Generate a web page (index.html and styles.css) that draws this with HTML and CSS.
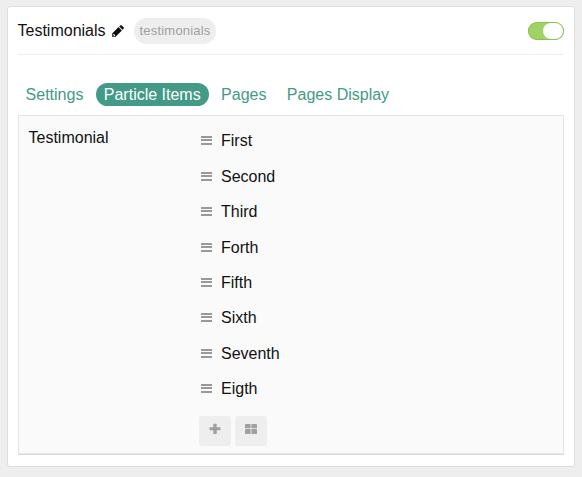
FILE: index.html
```html
<!DOCTYPE html>
<html lang="en">
<head>
<meta charset="utf-8">
<title>Testimonials</title>
<link rel="stylesheet" href="styles.css">
</head>
<body>
<section class="card">
  <header class="card-header">
    <h4 class="title">Testimonials</h4>
    <svg class="pencil" viewBox="0 0 12 12"><path fill="#111" fill-rule="evenodd" d="M.2 11.8V8.4L6.5 2.1l3.4 3.4-6.3 6.3zM7.2 1.4 8.3.4q.7-.6 1.4 0l1.9 1.9q.6.7 0 1.4l-1 1.1zM1.2 9.3v.9h.7v.8h.9l.5-.6-1.6-1.6z"/></svg>
    <span class="tag">testimonials</span>
    <span class="toggle"><span class="knob"></span></span>
  </header>
  <nav class="tabs">
    <a class="tab">Settings</a>
    <a class="tab active">Particle Items</a>
    <a class="tab">Pages</a>
    <a class="tab">Pages Display</a>
  </nav>
  <div class="panel">
    <div class="label">Testimonial</div>
    <div class="field">
      <ul class="items">
        <li><i class="bars"></i>First</li>
        <li><i class="bars"></i>Second</li>
        <li><i class="bars"></i>Third</li>
        <li><i class="bars"></i>Forth</li>
        <li><i class="bars"></i>Fifth</li>
        <li><i class="bars"></i>Sixth</li>
        <li><i class="bars"></i>Seventh</li>
        <li><i class="bars"></i>Eigth</li>
      </ul>
      <div class="actions">
        <span class="button"><svg width="12" height="12" viewBox="0 0 12 12"><path fill="#a0a0a0" d="M4.9.8h2.2q.6 0 .6.6v2.8h3.2q.6 0 .6.6v1.8q0 .6-.6.6H7.7v3.2q0 .6-.6.6H4.9q-.6 0-.6-.6V7.2H1.1q-.6 0-.6-.6V4.8q0-.6.6-.6h3.2V1.4q0-.6.6-.6z"/></svg></span>
        <span class="button"><svg width="12" height="12" viewBox="0 0 12 12"><g fill="#a0a0a0"><rect x="0" y="1" width="5.6" height="4.2" rx=".4"/><rect x="6.4" y="1" width="5.6" height="4.2" rx=".4"/><rect x="0" y="6" width="5.6" height="5" rx=".4"/><rect x="6.4" y="6" width="5.6" height="5" rx=".4"/></g></svg></span>
      </div>
    </div>
  </div>
</section>
</body>
</html>
```
FILE: styles.css
```css
* { box-sizing: border-box; }
body {
  margin: 0;
  padding: 6px 7px 10px;
  background: #eee;
  color: #111;
  font: 16px/24px "Liberation Sans", Arial, sans-serif;
}
.card {
  height: 461px;
  padding: 0 10px;
  background: #fff;
  border: 1px solid #ddd;
  border-radius: 3px;
}
.card-header {
  display: flex;
  align-items: center;
  height: 48px;
  border-bottom: 1px solid #eee;
}
.title { margin: 0 0 0 -0.5px; font-size: 16px; font-weight: 400; }
.pencil { width: 12px; height: 12px; margin: 0 10px 0 6.5px; }
.tag {
  height: 26px;
  padding: 0 5.5px;
  border-radius: 13px;
  background: #eee;
  color: #a0a0a0;
  font-size: 13px;
  letter-spacing: 0.2px;
  line-height: 25px;
}
.toggle {
  display: flex;
  justify-content: flex-end;
  width: 36px;
  height: 18px;
  margin-left: auto;
  padding: 1px;
  border-radius: 9px;
  background: #9fd365;
  box-shadow: inset 0 0 0 1px #8fc058;
}
.knob { width: 20px; height: 16px; border-radius: 8px; background: #fff; }
.tabs { display: flex; gap: 4.4px; margin-top: 28px; }
.tab {
  height: 23px;
  padding: 0 8.4px 0 7.6px;
  border-radius: 12px;
  color: #439a86;
  line-height: 23px;
}
.tab.active { background: #439a86; color: #fff; }
.panel {
  display: grid;
  grid-template-columns: 170px 1fr;
  height: 340px;
  margin-top: 9px;
  padding: 10px;
  background: #fafafa;
  border: 1px solid #e4e4e4;
  border-bottom-color: #d9d9d9;
  box-shadow: inset 0 -1px #e9e9e9;
}
.label { margin-left: -0.5px; }
.items { margin: 0; padding: 0.75px 0 0; list-style: none; }
.items li {
  display: flex;
  align-items: center;
  height: 35.4px;
  padding: 0 2px 6px;
}
.bars {
  width: 11px;
  height: 9px;
  margin: 0 9px 1px 0;
  background: linear-gradient(#999 2px, transparent 2px 3px, #999 3px 5px, transparent 5px 7px, #999 7px);
}
.actions { display: flex; gap: 4px; margin-top: 6.25px; }
.button {
  display: flex;
  justify-content: center;
  width: 32px;
  height: 30px;
  padding-top: 7px;
  border-radius: 3px;
  background: #eee;
}
```
